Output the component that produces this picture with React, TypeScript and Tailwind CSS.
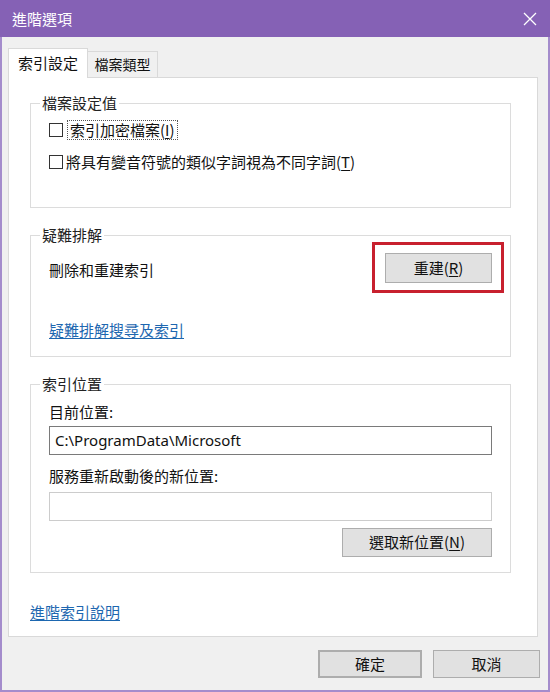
import React from "react";

const font = { fontFamily: '"Noto Sans CJK TC", "Noto Sans", sans-serif' };

function Mn({ c }: { c: string }) {
  return (
    <span>
      (<span className="underline underline-offset-2">{c}</span>)
    </span>
  );
}

function Group({
  title,
  className,
  children,
}: {
  title: string;
  className?: string;
  children: React.ReactNode;
}) {
  return (
    <fieldset className={`border border-[#dcdcdc] ${className ?? ""}`}>
      <legend className="ml-[9px] px-[2px] text-[15px] leading-[20px] text-[#222]">{title}</legend>
      {children}
    </fieldset>
  );
}

function Btn({
  children,
  className,
}: {
  children: React.ReactNode;
  className?: string;
}) {
  return (
    <div
      className={`flex items-center justify-center bg-[#e1e1e1] border border-[#adadad] text-[15px] text-[#111] ${className ?? ""}`}
    >
      {children}
    </div>
  );
}

export default function App() {
  return (
    <div className="w-[550px] h-[692px] flex flex-col bg-[#f0f0f0]" style={font}>
      {/* Title bar */}
      <div className="h-[37px] bg-[#8561b5] flex items-center justify-between pl-[12px] pr-[13px] shrink-0">
        <span className="text-white text-[15px] leading-[20px]">進階選項</span>
        <svg width="14" height="14" viewBox="0 0 14 14">
          <path d="M1 1 L13 13 M13 1 L1 13" stroke="#ffffff" strokeWidth="1.3" />
        </svg>
      </div>
      {/* Body */}
      <div className="flex-1 flex flex-col border-x-2 border-b-2 border-[#a48ccc] pl-[6px] pr-[8px] pt-[11px]">
        {/* Tabs */}
        <div className="flex items-end h-[29px] relative z-10">
          <div className="w-[80px] h-[30px] -mb-px bg-white border border-b-0 border-[#d9d9d9] flex items-center justify-center text-[15px] text-[#111]">
            索引設定
          </div>
          <div className="w-[70px] h-[26px] bg-[#f0f0f0] border border-l-0 border-b-0 border-[#d9d9d9] flex items-center justify-center text-[14px] text-[#111]">
            檔案類型
          </div>
        </div>
        {/* Panel */}
        <div className="w-[530px] h-[560px] bg-white border border-[#d9d9d9] pl-[21px] pr-[26px] pt-[15px] flex flex-col">
          {/* Group 1 */}
          <Group title="檔案設定值" className="h-[115px]">
            <div className="pl-[18px] flex flex-col">
              <div className="flex items-center h-[20px] mt-[7px] text-[15px] text-[#111]">
                <div className="w-[14px] h-[14px] border border-[#333] bg-white" />
                <span className="ml-[4px] px-[2px] border border-dotted border-[#555] leading-[18px]">
                  索引加密檔案<Mn c="I" />
                </span>
              </div>
              <div className="flex items-center h-[20px] mt-[12px] text-[15px] text-[#111]">
                <div className="w-[14px] h-[14px] border border-[#333] bg-white" />
                <span className="ml-[3px] leading-[18px]">
                  將具有變音符號的類似字詞視為不同字詞<Mn c="T" />
                </span>
              </div>
            </div>
          </Group>
          {/* Group 2 */}
          <Group title="疑難排解" className="h-[132px] mt-[17px]">
            <div className="pl-[18px] pr-[6px] flex flex-col">
              <div className="flex items-center justify-between -mt-[3px]">
                <span className="text-[15px] text-[#111] leading-[20px] mt-[4px]">刪除和重建索引</span>
                <div className="border-[3px] border-[#c8202e] pl-[10px] pr-[9px] pt-[8px] pb-[7px]">
                  <Btn className="w-[107px] h-[30px]">
                    重建<Mn c="R" />
                  </Btn>
                </div>
              </div>
              <div className="mt-[27px] h-[20px] flex items-center">
                <span className="text-[15px] text-[#1d67b0] underline underline-offset-2 leading-[20px]">
                  疑難排解搜尋及索引
                </span>
              </div>
            </div>
          </Group>
          {/* Group 3 */}
          <Group title="索引位置" className="h-[199px] mt-[17px]">
            <div className="px-[18px] flex flex-col">
              <div className="mt-[8px] h-[20px] flex items-center text-[15px] text-[#111]">目前位置:</div>
              <div className="mt-[4px] h-[29px] border border-[#7a7a7a] bg-white flex items-center pl-[5px] text-[15px] text-[#111]" style={{ fontFamily: '"Noto Sans", sans-serif' }}>
                C:\ProgramData\Microsoft
              </div>
              <div className="mt-[11px] h-[20px] flex items-center text-[15px] text-[#111]">服務重新啟動後的新位置:</div>
              <div className="mt-[6px] h-[29px] border border-[#cccccc] bg-white" />
              <div className="mt-[7px] flex justify-end">
                <Btn className="w-[150px] h-[29px]">
                  選取新位置<Mn c="N" />
                </Btn>
              </div>
            </div>
          </Group>
          <div className="mt-[29px] h-[20px] flex items-center">
            <span className="text-[15px] text-[#1d67b0] underline underline-offset-2 leading-[20px]">進階索引說明</span>
          </div>
        </div>
        {/* Bottom buttons */}
        <div className="flex justify-end gap-[11px] mt-[13px] pr-0">
          <Btn className="w-[104px] h-[28px] border-2 border-[#2a6fb5]">確定</Btn>
          <Btn className="w-[107px] h-[28px]">取消</Btn>
        </div>
      </div>
    </div>
  );
}
